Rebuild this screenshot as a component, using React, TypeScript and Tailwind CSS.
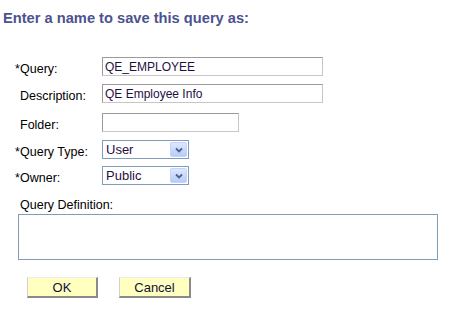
import { useState } from "react";

const font = { fontFamily: '"Liberation Sans", Arial, sans-serif' };

const TextBox = ({ value, width }: { value: string; width: string }) => (
  <div
    className={`${width} h-[19px] flex items-center px-[2px] bg-white border border-t-[#9a9a9a] border-l-[#9a9a9a] border-r-[#c6c6c6] border-b-[#c6c6c6] text-[12px] text-[#1f0f3f] leading-none`}
  >
    {value}
  </div>
);

const SelectBox = ({ value }: { value: string }) => (
  <div className="w-[87px] h-[19px] flex items-stretch bg-white border border-[#7f9db9]">
    <div className="flex-1 flex items-center pl-[3px] text-[13px] text-[#1f0f3f] leading-none">
      {value}
    </div>
    <div className="w-[17px] m-px flex items-center justify-center rounded-[2px] bg-gradient-to-b from-[#dde7fe] to-[#b7cbfa] border border-[#c3d3fd]">
      <svg width="8" height="6" viewBox="0 0 8 6">
        <path d="M1 1.5 L4 4.5 L7 1.5" stroke="#4d6185" strokeWidth="1.8" fill="none" />
      </svg>
    </div>
  </div>
);

const Label = ({ text, req }: { text: string; req?: boolean }) => (
  <div className="w-[87px] pt-[6px] flex text-[12.5px] text-black leading-none">
    <span className="w-[5px]">{req ? "*" : ""}</span>
    <span>{text}</span>
  </div>
);

const Button = ({ text, width }: { text: string; width: string }) => (
  <button
    className={`${width} h-[21px] bg-[#ffffc0] border-t border-l border-t-[#ececec] border-l-[#d0d0d0] border-r-2 border-b-2 border-r-[#8a8a8a] border-b-[#8a8a8a] text-[13px] text-[#10103a] leading-none`}
  >
    {text}
  </button>
);

export default function App() {
  const [def] = useState("");
  return (
    <div className="w-[453px] h-[309px] bg-white overflow-hidden" style={font}>
      <div className="pt-[10px] pl-[3px] text-[14.67px] font-bold text-[#4c5290] leading-[17px]">
        Enter a name to save this query as:
      </div>

      <div className="pl-[15px] flex flex-col">
        <div className="mt-[30px] flex items-center">
          <Label text="Query:" req />
          <TextBox value="QE_EMPLOYEE" width="w-[221px]" />
        </div>
        <div className="mt-[8px] flex items-center">
          <Label text="Description:" />
          <TextBox value="QE Employee Info" width="w-[221px]" />
        </div>
        <div className="mt-[10px] flex items-center">
          <Label text="Folder:" />
          <TextBox value="" width="w-[137px]" />
        </div>
        <div className="mt-[8px] flex items-center">
          <Label text="Query Type:" req />
          <SelectBox value="User" />
        </div>
        <div className="mt-[7px] flex items-center">
          <Label text="Owner:" req />
          <SelectBox value="Public" />
        </div>
      </div>

      <div className="pl-[20px] mt-[13px] text-[12.5px] text-black leading-[14px]">
        Query Definition:
      </div>
      <div className="pl-[18px] mt-[2px]">
        <div className="w-[420px] h-[46px] border border-[#7f9db9] bg-white text-[12px]">{def}</div>
      </div>

      <div className="pl-[27px] mt-[17px] flex gap-[21px]">
        <Button text="OK" width="w-[71px]" />
        <Button text="Cancel" width="w-[72px]" />
      </div>
    </div>
  );
}
